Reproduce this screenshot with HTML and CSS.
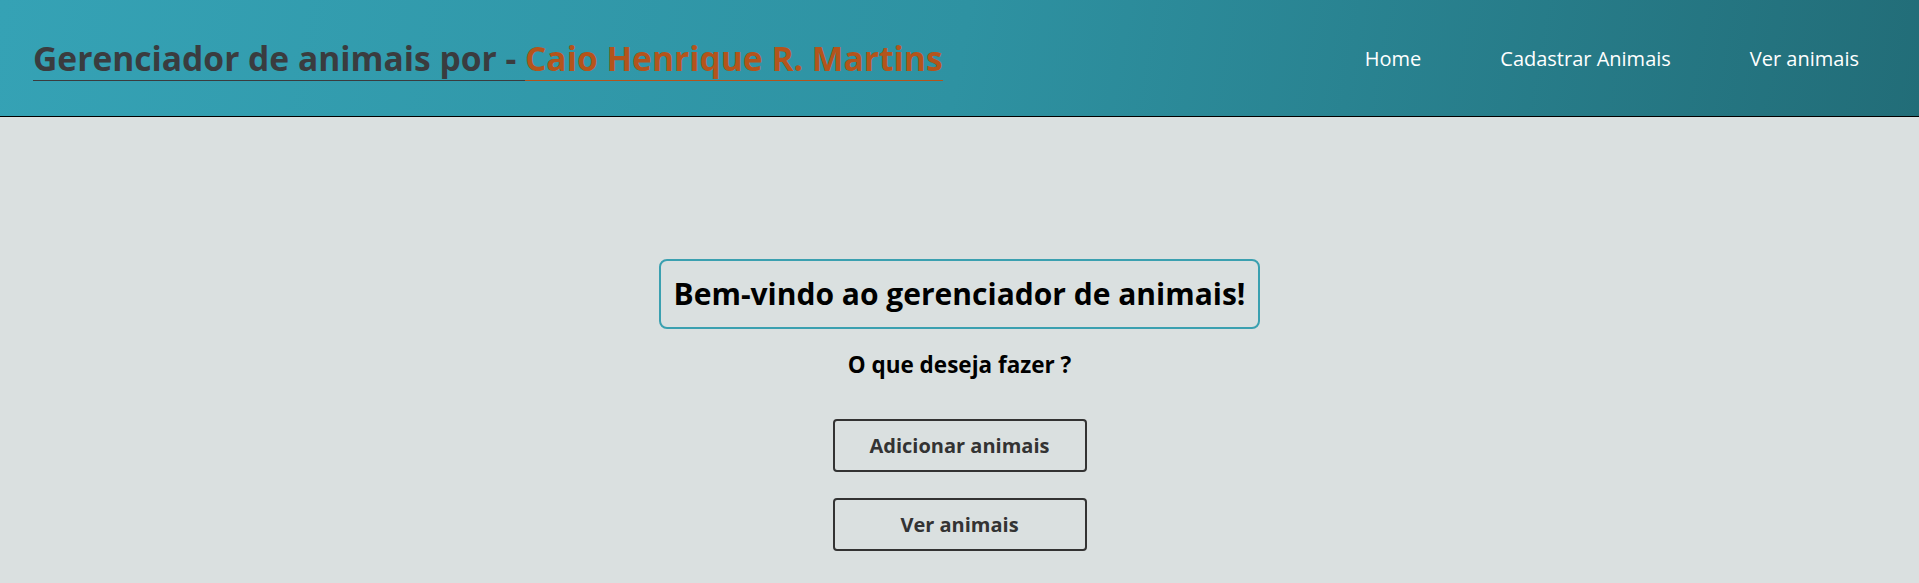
FILE: index.html
```html
<!DOCTYPE html>
<html lang="pt-BR">
<head>
<meta charset="utf-8">
<title>Gerenciador de animais</title>
<link rel="stylesheet" href="styles.css">
</head>
<body>
<header class="topbar">
  <h1 class="brand"><span class="brand-main">Gerenciador de animais por - </span><span class="brand-author">Caio Henrique R. Martins</span></h1>
  <nav class="nav">
    <a href="#" class="nav-link">Home</a>
    <a href="#" class="nav-link">Cadastrar Animais</a>
    <a href="#" class="nav-link">Ver animais</a>
  </nav>
</header>
<main class="content">
  <h2 class="welcome">Bem-vindo ao gerenciador de animais!</h2>
  <p class="question">O que deseja fazer ?</p>
  <div class="actions">
    <button class="action-btn">Adicionar animais</button>
    <button class="action-btn">Ver animais</button>
  </div>
</main>
</body>
</html>
```
FILE: styles.css
```css
* { box-sizing: border-box; }
html, body { margin: 0; padding: 0; }
body {
  background: #dae0e0;
  font-family: "Open Sans", "Noto Sans", sans-serif;
  min-height: 583px;
}
.topbar {
  height: 117px;
  display: flex;
  align-items: center;
  justify-content: space-between;
  padding: 0 60px 0 33px;
  background: linear-gradient(100deg, #35a2b5 0%, #2e92a2 50%, #226d78 100%);
  border-bottom: 1px solid #000;
}
.brand {
  margin: 0;
  font-size: 33.6px;
  font-weight: 700;
  line-height: 44px;
}
.brand-main, .brand-author {
  display: inline-block;
  white-space: pre;
}
.brand-main { color: #3a3c3f; border-bottom: 1px solid #3a3c3f; }
.brand-author { color: #b4541b; border-bottom: 1px solid #b4541b; }
.nav {
  display: flex;
  gap: 79px;
}
.nav-link {
  color: #fff;
  text-decoration: none;
  font-size: 20px;
}
.content {
  display: flex;
  flex-direction: column;
  align-items: center;
  padding-top: 142px;
}
.welcome {
  margin: 0;
  padding: 14px 13px;
  border: 2px solid #3aa0b0;
  border-radius: 8px;
  font-size: 30px;
  font-weight: 700;
  line-height: 38px;
  color: #000;
}
.question {
  margin: 21px 0 0;
  font-size: 22.5px;
  font-weight: 700;
  color: #000;
  line-height: 30px;
}
.actions {
  display: flex;
  flex-direction: column;
  gap: 26px;
  margin-top: 39px;
}
.action-btn {
  width: 254px;
  height: 53px;
  background: transparent;
  border: 2px solid #333;
  border-radius: 4px;
  font-family: inherit;
  font-size: 20px;
  font-weight: 700;
  color: #333;
}
```
